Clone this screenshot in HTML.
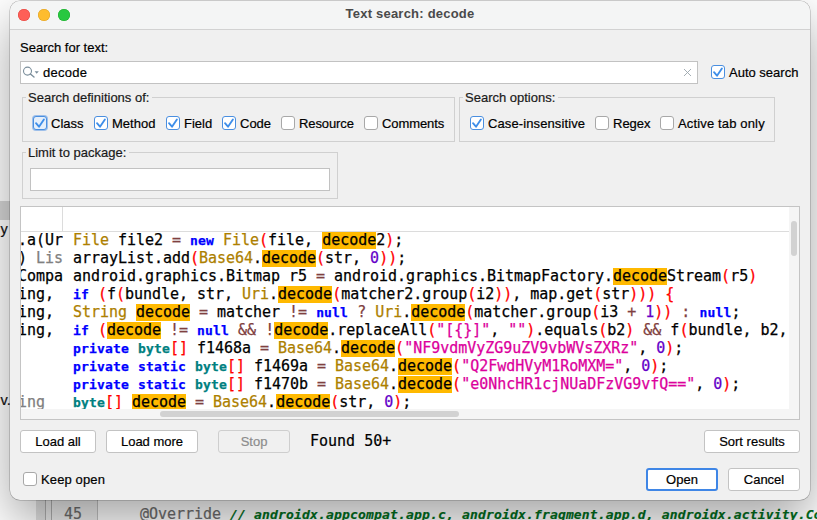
<!DOCTYPE html>
<html>
<head>
<meta charset="utf-8">
<title>Text search: decode</title>
<style>
*{box-sizing:border-box;margin:0;padding:0}
html,body{width:817px;height:520px;overflow:hidden;background:#fff}
body{-webkit-text-stroke:.2px;position:relative;font-family:"Liberation Sans",sans-serif;font-size:13px;color:#1a1a1a}
.abs{position:absolute}
/* background behind dialog */
#bg{position:absolute;left:0;top:0;width:817px;height:520px;background:#fff;overflow:hidden}
#bg .lstrip{position:absolute;left:0;top:0;width:10px;height:520px;background:#fff}
#bg .lsel{position:absolute;left:0;top:201px;width:10px;height:19px;background:#d6d6d6}
#bg .gut{position:absolute;left:38px;top:490px;width:58px;height:30px;background:#f0f0f0;border-left:1px solid #c8c8c8;border-right:1px solid #d0d0d0}
#bg .mono{position:absolute;font-family:"DejaVu Sans Mono",monospace;font-size:15px;white-space:pre;line-height:18px}
/* window */
#win{position:absolute;left:10px;top:1px;width:800px;height:499px;background:#f0f0f0;border-radius:10px;
 box-shadow:0 0 0 .5px rgba(0,0,0,.3),0 20px 50px rgba(0,0,0,.36);overflow:hidden}
#tb{position:absolute;left:0;top:0;width:800px;height:29px;background:#f4f5f5;border-bottom:1px solid #d2d2d2}
#tb .t{position:absolute;left:0;top:0;width:800px;text-align:center;font-weight:bold;font-size:13px;letter-spacing:.22px;line-height:26px;color:#4a4a4a;-webkit-text-stroke:0}
.tl{position:absolute;top:8px;width:12px;height:12px;border-radius:50%}
.lbl{position:absolute;white-space:pre;line-height:16px;font-size:13px;color:#000}
.inp{position:absolute;background:#fff;border:1px solid #c2c2c2}
.fs{position:absolute;border:1px solid #d0d0d0}
.leg{position:absolute;background:#f0f0f0;white-space:pre;line-height:16px;font-size:13px;padding:0 3px 0 2px;margin-left:1px}
.cb{position:absolute;width:14px;height:14px;border:1px solid #a8a8a8;border-radius:3px;background:#fff}
.cb.on{border-color:#4a8fe0}
.cb svg{position:absolute;left:0;top:0}
.btn{position:absolute;height:23px;border:1px solid #c3c3c3;border-radius:3px;background:#fff;text-align:center;line-height:21px;font-size:13px;color:#000}
/* table */
#tbl{position:absolute;left:10px;top:206px;width:780px;height:214px;background:#fff;border:1px solid #c4c4c4;overflow:hidden}
.row{position:absolute;left:0;height:18px;line-height:18px;font-family:"DejaVu Sans Mono",monospace;font-size:15px;letter-spacing:-0.03px;white-space:pre;color:#000;-webkit-text-stroke:.25px}
.c1{position:absolute;right:0;top:0}
.k{font-weight:bold;font-size:13px;letter-spacing:0.17px;color:#0000ff}
.t{}
.ty{font-weight:bold;font-size:13px;letter-spacing:0.17px;color:#008080}
.f{color:#ad8000}
.s{color:#ff0000}
.o{color:#804040}
.q{color:#dc009c}
.n{color:#6400c8}
.g{color:#808080}
.h{background:linear-gradient(to bottom,transparent 0,transparent .73px,#ffb900 .73px)}
</style>
</head>
<body>
<div id="bg">
  <div class="lstrip"></div>
  <div class="lsel"></div>
  <div class="abs" style="left:0.5px;top:220.5px;font-size:14.5px;line-height:16px;color:#111">y</div>
  <div class="abs" style="left:0.5px;top:392px;font-size:14.5px;line-height:16px;color:#111;white-space:pre">v.</div>
  <div class="abs" style="left:36px;top:480px;width:9px;height:40px;background:#e2e2e2"></div>
  <div class="abs" style="left:45px;top:480px;width:1px;height:40px;background:#b0b0b0"></div>
  <div class="abs" style="left:46px;top:480px;width:5px;height:40px;background:#ebebeb"></div>
  <div class="abs" style="left:51px;top:480px;width:1px;height:40px;background:#b0b0b0"></div>
  <div class="abs" style="left:52px;top:480px;width:45px;height:40px;background:#eeeeee"></div>
  <div class="abs" style="left:97px;top:480px;width:1px;height:40px;background:#c4c4c4"></div>
  <div class="mono" style="left:64px;top:505px;color:#6e6e6e">45</div>
  <div class="mono" style="left:140px;top:505px;color:#6e6e6e;letter-spacing:-0.03px">@Override <span style="color:#006e1c;font-style:italic;font-weight:bold;font-size:13px;letter-spacing:.17px">// androidx.appcompat.app.c, androidx.fragment.app.d, androidx.activity.ComponentActivity</span></div>
</div>

<div id="win">
 <div id="inner" style="position:absolute;left:0;top:-1px;width:800px;height:500px">
  <div id="tb" style="top:1px">
    <div class="tl" style="left:8px;background:#fe5f57;box-shadow:inset 0 0 0 .5px #e0443e"></div>
    <div class="tl" style="left:28px;background:#febc2e;box-shadow:inset 0 0 0 .5px #dea123"></div>
    <div class="tl" style="left:48px;background:#28c840;box-shadow:inset 0 0 0 .5px #1aab29"></div>
    <div class="t">Text search: decode</div>
  </div>

  <div class="lbl" style="left:10px;top:40px">Search for text:</div>
  <div class="inp" style="left:10px;top:61px;width:678px;height:23px"></div>
  <svg class="abs" style="left:12px;top:64px" width="20" height="16" viewBox="0 0 20 16">
    <circle cx="5.5" cy="7.1" r="4" fill="none" stroke="#7b8e9b" stroke-width="1.1"/>
    <path d="M8.4 10 L12 13" stroke="#7b8e9b" stroke-width="1.4" fill="none" stroke-linecap="round"/>
    <path d="M12.6 7.2 h4.2 l-2.1 2.6 z" fill="#7b8e9b"/>
  </svg>
  <div class="lbl" style="left:33px;top:65px;letter-spacing:0.25px">decode</div>
  <svg class="abs" style="left:672px;top:67px" width="11" height="11" viewBox="0 0 11 11"><path d="M2 2 L9 9 M9 2 L2 9" stroke="#9aa5ac" stroke-width=".9"/></svg>

  <div class="cb on" style="left:701px;top:65px"><svg width="12" height="12" viewBox="0 0 12 12"><path d="M2 6.2 L5 9.7 L9.9 2.4" fill="none" stroke="#3e8ee9" stroke-width="1.85" stroke-linecap="round" stroke-linejoin="round"/></svg></div>
  <div class="lbl" style="left:719px;top:65px">Auto search</div>

  <!-- Search definitions -->
  <div class="fs" style="left:12px;top:97px;width:433px;height:45px"></div>
  <div class="leg" style="left:15px;top:90px">Search definitions of:</div>
  <div class="cb on foc" style="left:23px;top:116px;background:#e5effb;box-shadow:0 0 0 1px #9dbfea"><svg width="12" height="12" viewBox="0 0 12 12"><path d="M2 6.2 L5 9.7 L9.9 2.4" fill="none" stroke="#3e8ee9" stroke-width="1.85" stroke-linecap="round" stroke-linejoin="round"/></svg></div>
  <div class="lbl" style="left:41px;top:116px">Class</div>
  <div class="cb on" style="left:84px;top:116px"><svg width="12" height="12" viewBox="0 0 12 12"><path d="M2 6.2 L5 9.7 L9.9 2.4" fill="none" stroke="#3e8ee9" stroke-width="1.85" stroke-linecap="round" stroke-linejoin="round"/></svg></div>
  <div class="lbl" style="left:102px;top:116px">Method</div>
  <div class="cb on" style="left:156px;top:116px"><svg width="12" height="12" viewBox="0 0 12 12"><path d="M2 6.2 L5 9.7 L9.9 2.4" fill="none" stroke="#3e8ee9" stroke-width="1.85" stroke-linecap="round" stroke-linejoin="round"/></svg></div>
  <div class="lbl" style="left:174px;top:116px">Field</div>
  <div class="cb on" style="left:212px;top:116px"><svg width="12" height="12" viewBox="0 0 12 12"><path d="M2 6.2 L5 9.7 L9.9 2.4" fill="none" stroke="#3e8ee9" stroke-width="1.85" stroke-linecap="round" stroke-linejoin="round"/></svg></div>
  <div class="lbl" style="left:230px;top:116px">Code</div>
  <div class="cb" style="left:271px;top:116px"></div>
  <div class="lbl" style="left:289px;top:116px;letter-spacing:-0.1px">Resource</div>
  <div class="cb" style="left:354px;top:116px"></div>
  <div class="lbl" style="left:372px;top:116px;letter-spacing:-0.1px">Comments</div>

  <!-- Search options -->
  <div class="fs" style="left:449px;top:97px;width:316px;height:45px"></div>
  <div class="leg" style="left:452px;top:90px">Search options:</div>
  <div class="cb on" style="left:460px;top:116px"><svg width="12" height="12" viewBox="0 0 12 12"><path d="M2 6.2 L5 9.7 L9.9 2.4" fill="none" stroke="#3e8ee9" stroke-width="1.85" stroke-linecap="round" stroke-linejoin="round"/></svg></div>
  <div class="lbl" style="left:478px;top:116px;letter-spacing:0.11px">Case-insensitive</div>
  <div class="cb" style="left:585px;top:116px"></div>
  <div class="lbl" style="left:603px;top:116px">Regex</div>
  <div class="cb" style="left:650px;top:116px"></div>
  <div class="lbl" style="left:668px;top:116px;letter-spacing:0.15px">Active tab only</div>

  <!-- Limit to package -->
  <div class="fs" style="left:12px;top:152px;width:316px;height:47px"></div>
  <div class="leg" style="left:15px;top:145px">Limit to package:</div>
  <div class="inp" style="left:20px;top:168px;width:300px;height:23px"></div>

  <!-- table -->
  <div id="tbl">
    <div class="abs" style="left:0;top:24px;width:768px;height:1px;background:#dcdcdc"></div>
    <div class="abs" style="left:41px;top:0;width:1px;height:25px;background:#dcdcdc"></div>
    <!--ROWS-->
<div class="row" style="top:24px;left:0;width:42px;overflow:hidden"><span class="c1">.a(Ur</span></div>
<div class="row" style="top:24px;left:52px"><span class="f">File</span> file2 <span class="o">=</span> <span class="k">new</span> <span class="f">File</span><span class="s">(</span>file, <span class="h">decode</span>2<span class="s">)</span>;</div>
<div class="row" style="top:42px;left:0;width:42px;overflow:hidden"><span class="c1">) <span class="g">Lis</span></span></div>
<div class="row" style="top:42px;left:52px">arrayList.add<span class="s">(</span><span class="f">Base64</span>.<span class="h">decode</span><span class="s">(</span>str, <span class="n">0</span><span class="s">))</span>;</div>
<div class="row" style="top:60px;left:0;width:42px;overflow:hidden"><span class="c1">Compa</span></div>
<div class="row" style="top:60px;left:52px">android.graphics.Bitmap r5 <span class="o">=</span> android.graphics.BitmapFactory.<span class="h">decode</span>Stream<span class="s">(</span>r5<span class="s">)</span></div>
<div class="row" style="top:78px;left:0;width:42px;overflow:hidden"><span class="c1">ing, </span></div>
<div class="row" style="top:78px;left:52px"><span class="k">if</span> <span class="s">(</span>f<span class="s">(</span>bundle, str, <span class="f">Uri</span>.<span class="h">decode</span><span class="s">(</span>matcher2.group<span class="s">(</span>i2<span class="s">))</span>, map.get<span class="s">(</span>str<span class="s">)))</span> <span class="s">{</span></div>
<div class="row" style="top:96px;left:0;width:42px;overflow:hidden"><span class="c1">ing, </span></div>
<div class="row" style="top:96px;left:52px"><span class="f">String</span> <span class="h">decode</span> <span class="o">=</span> matcher <span class="o">!=</span> <span class="k">null</span> <span class="o">?</span> <span class="f">Uri</span>.<span class="h">decode</span><span class="s">(</span>matcher.group<span class="s">(</span>i3 <span class="o">+</span> <span class="n">1</span><span class="s">))</span> <span class="o">:</span> <span class="k">null</span>;</div>
<div class="row" style="top:114px;left:0;width:42px;overflow:hidden"><span class="c1">ing, </span></div>
<div class="row" style="top:114px;left:52px"><span class="k">if</span> <span class="s">(</span><span class="h">decode</span> <span class="o">!=</span> <span class="k">null</span> <span class="o">&amp;&amp;</span> <span class="o">!</span><span class="h">decode</span>.replaceAll<span class="s">(</span><span class="q">"[{}]"</span>, <span class="q">""</span><span class="s">)</span>.equals<span class="s">(</span>b2<span class="s">)</span> <span class="o">&amp;&amp;</span> f<span class="s">(</span>bundle, b2,</div>
<div class="row" style="top:132px;left:52px"><span class="k">private</span> <span class="ty">byte</span><span class="s">[]</span> f1468a <span class="o">=</span> <span class="f">Base64</span>.<span class="h">decode</span><span class="s">(</span><span class="q">"NF9vdmVyZG9uZV9vbWVsZXRz"</span>, <span class="n">0</span><span class="s">)</span>;</div>
<div class="row" style="top:150px;left:52px"><span class="k">private</span> <span class="k">static</span> <span class="ty">byte</span><span class="s">[]</span> f1469a <span class="o">=</span> <span class="f">Base64</span>.<span class="h">decode</span><span class="s">(</span><span class="q">"Q2FwdHVyM1RoMXM="</span>, <span class="n">0</span><span class="s">)</span>;</div>
<div class="row" style="top:168px;left:52px"><span class="k">private</span> <span class="k">static</span> <span class="ty">byte</span><span class="s">[]</span> f1470b <span class="o">=</span> <span class="f">Base64</span>.<span class="h">decode</span><span class="s">(</span><span class="q">"e0NhcHR1cjNUaDFzVG9vfQ=="</span>, <span class="n">0</span><span class="s">)</span>;</div>
<div class="row" style="top:186px;left:0;width:42px;overflow:hidden"><span class="c1"><span class="g">ing</span>  </span></div>
<div class="row" style="top:186px;left:52px"><span class="ty">byte</span><span class="s">[]</span> <span class="h">decode</span> <span class="o">=</span> <span class="f">Base64</span>.<span class="h">decode</span><span class="s">(</span>str, <span class="n">0</span><span class="s">)</span>;</div>
<!--/ROWS-->
    <!-- scrollbars -->
    <div class="abs" style="left:768px;top:0;width:10px;height:212px;background:#f5f5f5"></div>
    <div class="abs" style="left:0;top:202px;width:778px;height:10px;background:#f5f5f5"></div>
    <div class="abs" style="left:770px;top:14px;width:6px;height:35px;border-radius:3px;background:#d2d2d2"></div>
    <div class="abs" style="left:139px;top:204px;width:299px;height:6px;border-radius:3px;background:#d2d2d2"></div>
  </div>

  <!-- bottom buttons -->
  <div class="btn" style="left:10px;top:430px;width:76px">Load all</div>
  <div class="btn" style="left:96px;top:430px;width:92px">Load more</div>
  <div class="btn" style="left:208px;top:430px;width:72px;color:#8c8c8c;background:#f0f0f0;border-color:#cecece">Stop</div>
  <div class="abs" style="left:300px;top:432px;font-family:'DejaVu Sans Mono',monospace;font-size:15px;line-height:18px;white-space:pre;color:#000">Found 50+</div>
  <div class="btn" style="left:694px;top:430px;width:96px">Sort results</div>

  <div class="cb" style="left:13px;top:472px"></div>
  <div class="lbl" style="left:31px;top:472px;letter-spacing:0.13px">Keep open</div>
  <div class="btn" style="left:636px;top:468px;width:72px;border:2px solid #3f86e6;line-height:19px">Open</div>
  <div class="btn" style="left:718px;top:468px;width:72px">Cancel</div>
 </div>
</div>
</body>
</html>
